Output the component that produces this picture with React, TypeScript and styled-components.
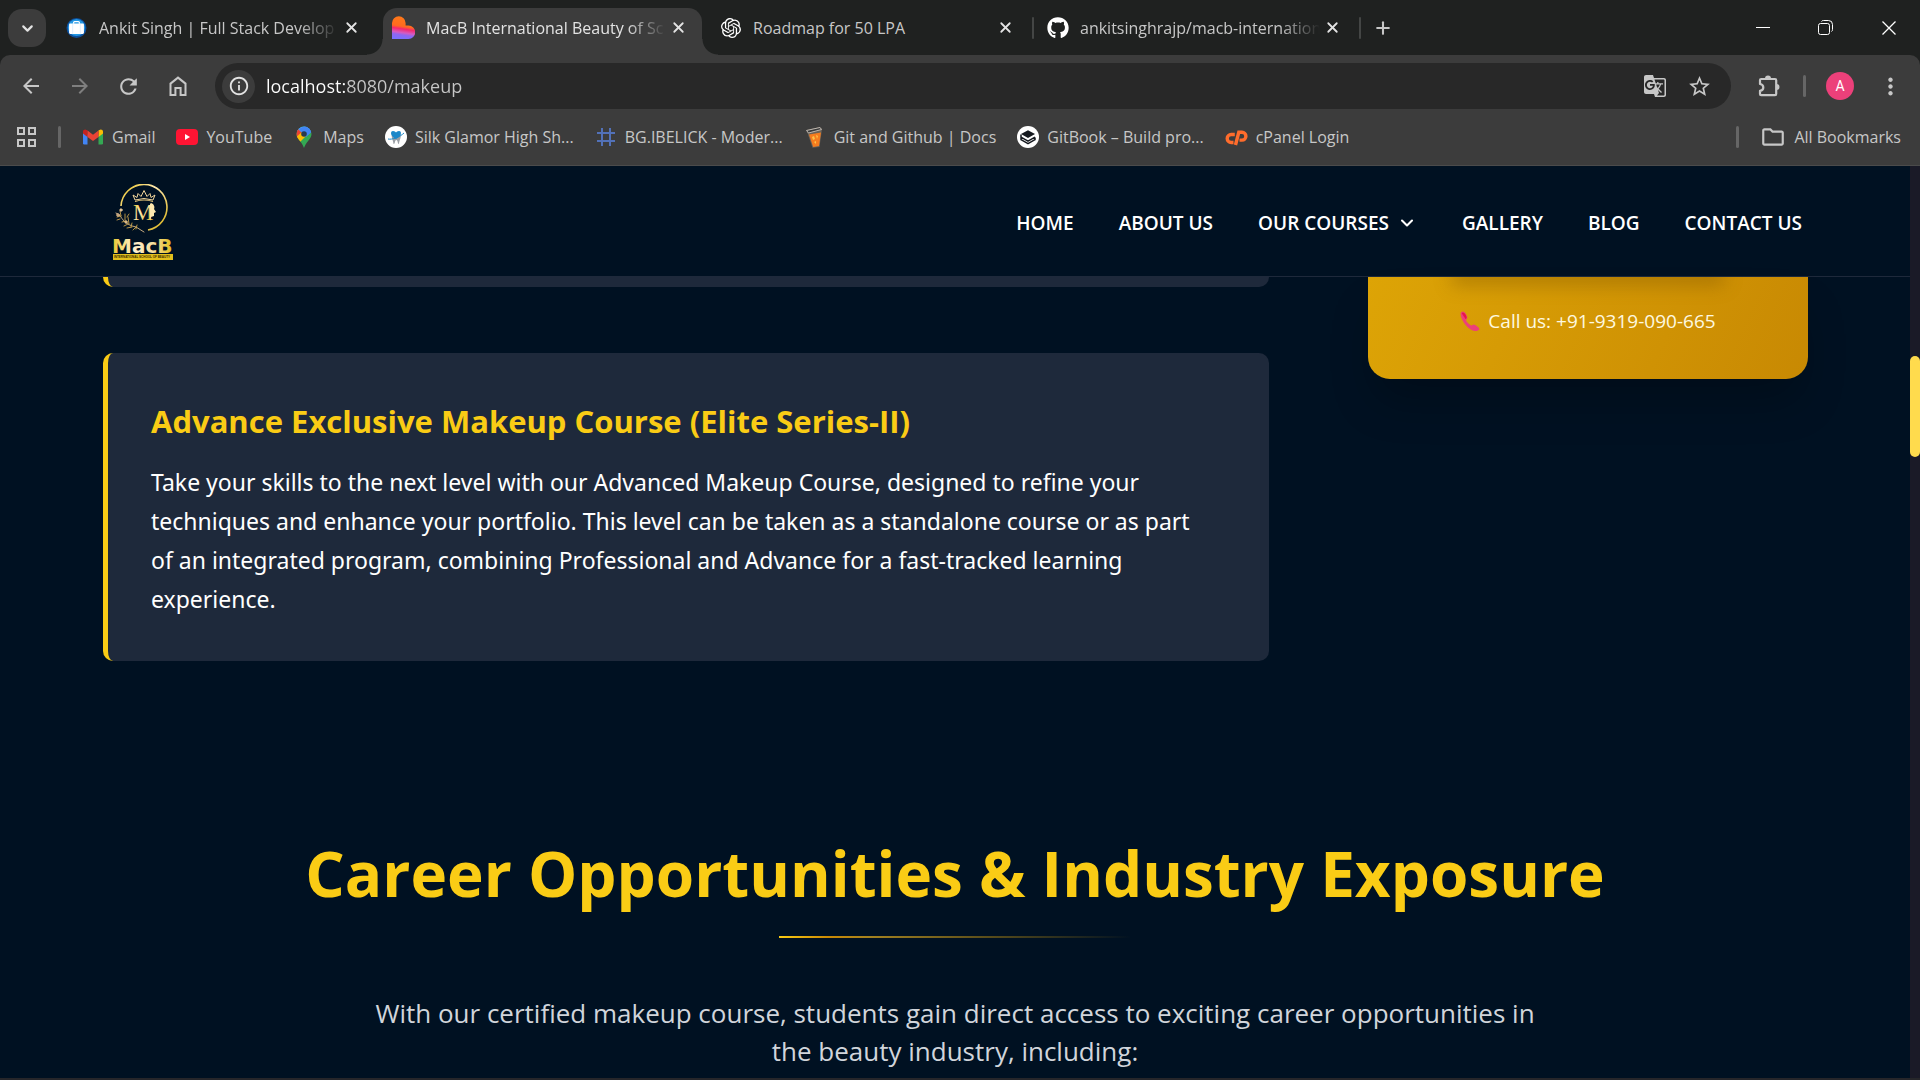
import React from "react";
import styled, { createGlobalStyle, css } from "styled-components";
import { SiOpenai } from "react-icons/si";
import { FaGithub } from "react-icons/fa";
import {
  MdArrowBack,
  MdArrowForward,
  MdGTranslate,
  MdInfoOutline,
  MdMoreVert,
  MdOutlineFolder,
  MdRefresh,
  MdStarBorder,
} from "react-icons/md";
import { ChevronDown, Plus, X } from "lucide-react";

const color = {
  strip: "#1f2120",
  toolbar: "#3c3c3c",
  omnibox: "#282828",
  chromeText: "#c7c7c7",
  chromeBright: "#e3e3e3",
  page: "#001122",
  card: "#1e293b",
  gold: "#facc15",
};

const GlobalStyle = createGlobalStyle`
  *, *::before, *::after { box-sizing: border-box; }
  body { margin: 0; background: ${color.page}; }
  h2, h3, p { margin: 0; }
  button { border: 0; padding: 0; background: none; color: inherit; font: inherit; cursor: pointer; }
  a { color: inherit; text-decoration: none; }
  svg { display: block; flex: none; }
`;

const Window = styled.div`
  display: flex;
  flex-direction: column;
  height: 100vh;
  overflow: hidden;
  border-bottom: 2px solid #26262a;
  font-family: "Open Sans", "Noto Sans", sans-serif;
  color: #fff;
`;

/* ---------- browser: tabs ---------- */

const TabStrip = styled.header`
  display: flex;
  align-items: stretch;
  height: 55px;
  flex: none;
  padding-left: 8px;
  background: ${color.strip};
  color: ${color.chromeText};
  font-size: 16px;
`;

const TabSearch = styled.button`
  display: grid;
  place-items: center;
  width: 38px;
  height: 38px;
  margin: 9px 10px 0 0;
  border-radius: 14px;
  background: ${color.toolbar};
  color: ${color.chromeBright};
`;

const flare = css`
  content: "";
  position: absolute;
  bottom: 0;
  width: 16px;
  height: 16px;
`;

const Tab = styled.div<{ $active?: boolean }>`
  position: relative;
  display: flex;
  align-items: center;
  flex: 0 1 319px;
  min-width: 0;
  margin-top: 8px;
  padding: 0 12px 8px 9px;
  border-radius: 14px 14px 0 0;
  ${(p) =>
    p.$active &&
    css`
      background: ${color.toolbar};
      color: ${color.chromeBright};
      &::before {
        ${flare}
        left: -16px;
        background: radial-gradient(circle at 0 0, transparent 15px, ${color.toolbar} 16px);
      }
      &::after {
        ${flare}
        right: -16px;
        background: radial-gradient(circle at 100% 0, transparent 15px, ${color.toolbar} 16px);
      }
    `}
`;

const TabIcon = styled.span`
  display: grid;
  place-items: center;
  flex: none;
  width: 23px;
  margin-right: 11px;
`;

const TabTitle = styled.button<{ $faded?: boolean }>`
  flex: 1;
  min-width: 0;
  white-space: nowrap;
  text-align: left;
  line-height: 24px;
  ${(p) =>
    p.$faded &&
    css`
      mask-image: linear-gradient(90deg, #000 calc(100% - 40px), transparent);
    `}
`;

const TabClose = styled.button`
  display: grid;
  place-items: center;
  flex: none;
  width: 24px;
  height: 24px;
  color: ${color.chromeBright};
`;

const TabDivider = styled.span<{ $visible?: boolean }>`
  align-self: center;
  flex: none;
  width: 2px;
  height: 22px;
  margin: 0 3px;
  border-radius: 1px;
  background: ${(p) => (p.$visible ? "#444645" : "transparent")};
`;

const NewTab = styled.button`
  display: grid;
  place-items: center;
  width: 38px;
`;

const WindowControls = styled.div`
  display: flex;
  margin-left: auto;
  color: #fff;
`;

const WindowButton = styled.button`
  display: grid;
  place-items: center;
  width: 63px;
`;

/* ---------- browser: toolbar ---------- */

const ToolbarBack = styled.div`
  flex: none;
  background: ${color.strip};
`;

const Toolbar = styled.div`
  display: flex;
  flex-direction: column;
  height: 111px;
  padding-top: 8px;
  border-radius: 10px 10px 0 0;
  border-bottom: 1px solid #4b4b4b;
  background: ${color.toolbar};
  color: ${color.chromeText};
`;

const AddressRow = styled.div`
  display: flex;
  align-items: center;
  height: 46px;
  padding: 0 16px 0 6px;
`;

const NavButton = styled.button<{ $muted?: boolean }>`
  display: grid;
  place-items: center;
  width: 49px;
  height: 46px;
  color: ${(p) => (p.$muted ? "#7f7f7f" : color.chromeText)};
`;

const Omnibox = styled.div`
  display: flex;
  align-items: center;
  flex: 1;
  height: 46px;
  margin: 0 16px 0 13px;
  padding: 0 20px 0 7px;
  border-radius: 23px;
  background: ${color.omnibox};
`;

const SiteInfo = styled.button`
  display: grid;
  place-items: center;
  width: 33px;
  height: 33px;
  border-radius: 50%;
  background: ${color.toolbar};
  color: ${color.chromeBright};
`;

const AddressInput = styled.input`
  flex: 1;
  min-width: 0;
  height: 40px;
  padding: 0 0 0 11px;
  border: 0;
  outline: 0;
  font: 18px "Open Sans", sans-serif;
  color: transparent;
  background: linear-gradient(90deg, #fff 90px, ${color.chromeText} 90px);
  background-clip: text;
`;

const OmniAction = styled.button`
  display: grid;
  place-items: center;
  width: 24px;
  height: 40px;
  margin-left: 20px;
`;

const Separator = styled.span<{ $space?: number }>`
  flex: none;
  width: 3px;
  height: 22px;
  margin: 0 ${(p) => p.$space ?? 0}px;
  border-radius: 2px;
  background: #666;
`;

const ToolButton = styled.button`
  display: grid;
  place-items: center;
  width: 44px;
  height: 44px;
`;

const Avatar = styled.button`
  display: grid;
  place-items: center;
  width: 28px;
  height: 28px;
  border-radius: 50%;
  background: #ec407a;
  color: #fff;
  font: 14px Roboto, sans-serif;
`;

const MenuButton = styled(ToolButton)`
  width: 28px;
  margin-left: 14px;
`;

const BookmarkBar = styled.nav`
  display: flex;
  align-items: center;
  gap: 21px;
  height: 56px;
  padding: 0 19px 0 16px;
  font-size: 16px;
  line-height: 24px;
`;

const Bookmark = styled.a`
  display: flex;
  align-items: center;
  gap: 8px;
  white-space: nowrap;
`;

const BookmarkEnd = styled.div`
  display: flex;
  align-items: center;
  gap: 21px;
  margin-left: auto;
`;

/* ---------- web page ---------- */

const Viewport = styled.div`
  display: flex;
  flex: 1;
  min-height: 0;
  background: ${color.page};
`;

const Page = styled.div`
  flex: 1;
  min-width: 0;
  overflow: hidden;
`;

const ScrollTrack = styled.div`
  flex: none;
  width: 10px;
  padding-top: 190px;
  background: #1a1a27;
`;

const ScrollThumb = styled.div`
  height: 101px;
  border-radius: 5px;
  background: #ffdb4d;
`;

const SiteHeader = styled.header`
  display: flex;
  align-items: center;
  justify-content: space-between;
  height: 111px;
  padding: 3px 108px 0 110px;
  border-bottom: 1px solid #1e293b;
`;

const SiteNav = styled.nav`
  display: flex;
  align-items: center;
  gap: 45px;
  font-size: 19px;
  font-weight: 600;
  line-height: 28px;
`;

const MenuToggle = styled.button`
  display: flex;
  align-items: center;
  gap: 8px;
`;

const CourseArea = styled.section`
  display: flex;
  align-items: flex-start;
  gap: 99px;
  padding: 0 102px 0 103px;
`;

const CourseList = styled.div`
  flex: 1;
  min-width: 0;
`;

const CardTail = styled.div`
  height: 10px;
  margin-bottom: 66px;
  border-left: 5px solid ${color.gold};
  border-radius: 0 0 10px 10px;
  background: ${color.card};
`;

const CourseCard = styled.article`
  padding: 44px 44px 42px 43px;
  border-left: 5px solid ${color.gold};
  border-radius: 10px;
  background: ${color.card};
`;

const CourseTitle = styled.h3`
  margin-bottom: 18px;
  color: ${color.gold};
  font-size: 31px;
  font-weight: 700;
  line-height: 48px;
`;

const CourseText = styled.p`
  max-width: 1056px;
  font-family: "Noto Sans", "Open Sans", sans-serif;
  font-size: 23px;
  line-height: 39px;
`;

const CallCard = styled.aside`
  width: 440px;
  flex: none;
  padding-bottom: 40px;
  border-radius: 0 0 22px 22px;
  background: linear-gradient(115deg, #dda406, #c88903);
  box-shadow: 0 28px 44px -8px rgba(0, 0, 0, 0.25);
`;

const ButtonShade = styled.div`
  height: 28px;
  margin: 0 64px;
  overflow: hidden;
  &::before {
    content: "";
    display: block;
    height: 10px;
    margin: -10px 24px 0;
    box-shadow: 0 4px 18px 4px rgba(120, 80, 0, 0.4);
  }
`;

const CallLine = styled.p`
  display: flex;
  align-items: center;
  justify-content: center;
  gap: 8px;
  padding: 2px 0 4px;
  color: #fef9e0;
  font-size: 19px;
  line-height: 28px;
`;

const Career = styled.section`
  display: flex;
  flex-direction: column;
  align-items: center;
  margin-top: 174px;
  padding: 0 102px;
`;

const CareerTitle = styled.h2`
  color: ${color.gold};
  font-size: 62px;
  font-weight: 700;
  line-height: 76px;
  text-align: center;
`;

const TitleRule = styled.div`
  width: 352px;
  height: 2px;
  margin: 25px 0 56px;
  background: linear-gradient(90deg, #facc15, #ca8a04 14%, #a38220 26%, rgba(160, 125, 20, 0.55) 60%, transparent);
`;

const CareerText = styled.p`
  max-width: 1200px;
  color: #d1d5db;
  font-size: 26px;
  line-height: 38px;
  text-align: center;
`;

/* ---------- drawings ---------- */

const BriefcaseIcon = () => (
  <svg width="21" height="22" viewBox="0 0 22 22">
    <circle cx="11" cy="11" r="10.5" fill="#0d4f9c" />
    <circle cx="11" cy="10.500" r="9" fill="#2196e3" />
    <path d="M8 6.500V5.200Q8 4.200 9 4.200h4q1 0 1 1v1.300" fill="none" stroke="#fff" strokeWidth="1.3" />
    <rect x="3.200" y="6.400" width="15.600" height="10.800" rx="1.2" fill="#fff" />
    <path d="M7 6.500v10.500M15 6.500v10.500" stroke="#cfe6fa" strokeWidth=".7" />
  </svg>
);

const HeartIcon = () => (
  <svg width="23" height="23" viewBox="0 0 23 23">
    <defs>
      <linearGradient id="heart" x1=".55" y1="0" x2=".4" y2="1">
        <stop offset="0" stopColor="#ff7a18" />
        <stop offset=".45" stopColor="#ff6a1f" />
        <stop offset=".56" stopColor="#f5286e" />
        <stop offset=".72" stopColor="#d65cc0" />
        <stop offset=".82" stopColor="#8f66f0" />
        <stop offset="1" stopColor="#7a70ff" />
      </linearGradient>
    </defs>
    <path d="M0 7a6.800 6.800 0 0 1 13.600 0v2.600H16.500a6.500 6.500 0 0 1 0 13.400H0z" fill="url(#heart)" />
  </svg>
);

const GmailIcon = () => (
  <svg width="22" height="22" viewBox="0 0 22 22">
    <path d="M1 5.5V17.2q0 1.3 1.3 1.3H5.5V8.8z" fill="#4285f4" />
    <path d="M21 5.5V17.2q0 1.3-1.3 1.3H16.5V8.8z" fill="#34a853" />
    <path d="M16.5 4.6V11L21 7.6V5.6c0-2.1-2.3-2.8-3.6-1.7z" fill="#fbbc04" />
    <path d="M1 5.6v2L5.5 11V4.6l-.9-.7C3.3 2.8 1 3.5 1 5.6z" fill="#c5221f" />
    <path d="M5.5 4.6V11l5.5 4.1L16.5 11V4.6L11 8.7z" fill="#ea4335" />
  </svg>
);

const YouTubeIcon = () => (
  <svg width="22" height="22" viewBox="0 0 22 22">
    <rect x="0" y="3" width="22" height="16" rx="4" fill="#ff1433" />
    <path d="M9 8l5 3-5 3z" fill="#fff" />
  </svg>
);

const MapsIcon = () => (
  <svg width="22" height="22" viewBox="0 0 22 22">
    <defs>
      <clipPath id="pin">
        <path d="M11 .5a7.5 7.5 0 0 0-7.5 7.500c0 3 1.700 4.700 3.600 7.200C8.800 17.400 9.800 19 11 22c1.200-3 2.200-4.600 3.900-6.800 1.900-2.500 3.600-4.200 3.600-7.200A7.500 7.500 0 0 0 11 .5z" />
      </clipPath>
    </defs>
    <g clipPath="url(#pin)">
      <path d="M0 0h22v22H0z" fill="#34a853" />
      <path d="M0 0h22L11 11 3 4z" fill="#4a9bf5" />
      <path d="M0 0l5 3 5 5-7 7-3-4z" fill="#ea4335" />
      <path d="M2 12l8-7 3 5-8 8z" fill="#fbbc04" />
      <path d="M6 3L16-2l4 7-7 6z" fill="#4285f4" />
    </g>
    <circle cx="11" cy="8" r="2.8" fill="#2a3a4e" />
  </svg>
);

const ToothIcon = () => (
  <svg width="22" height="22" viewBox="0 0 22 22">
    <circle cx="11" cy="11" r="11" fill="#fff" />
    <path d="M7 8c-1 4 1 5 1.500 10 2 0 1-4 2.800-4s1 4 2.700 4c.5-5 2.500-6 1.500-10z" fill="#9b9fa5" />
    <path d="M11 13C5 10 5 5 8 5c1.500 0 2.500.8 3 1.600C11.500 5.800 12.500 5 14 5c3 0 3 5-3 8z" fill="#1c87c9" />
    <path d="M3 13c4 1 12-2 16-6" fill="none" stroke="#1c87c9" strokeWidth="1" />
  </svg>
);

const HashIcon = () => (
  <svg width="22" height="22" viewBox="0 0 22 22">
    <path d="M7 2v18M15 2v18M2 7h18M2 15h18" stroke="#5271b8" strokeWidth="2" />
  </svg>
);

const CupIcon = () => (
  <svg width="22" height="22" viewBox="0 0 22 22">
    <path d="M2.500 4L16 1l2 2-2.500 18-7 .8z" fill="#6b6258" />
    <path d="M2.500 4.500L16 1.500l1.500 2L4.500 7z" fill="#3a3a3a" stroke="#bdb7b0" strokeWidth="1" />
    <path d="M5 8.500l12-2L15 20l-5.800 1z" fill="#f57c1f" />
    <path d="M8 11l2-1 1 3-2 1zM12 9l2 1-1 3zM10 16l2-1v3z" fill="#ffc247" />
  </svg>
);

const GitBookIcon = () => (
  <svg width="22" height="22" viewBox="0 0 22 22">
    <circle cx="11" cy="11" r="11" fill="#fff" />
    <path d="M11 4.200L18 8l-7 4-7-4z" fill="#15191f" />
    <path d="M4 8.500v2.700l7 4 7-4M4 11.500v2.200l7 4 7-4v-2.200" fill="none" stroke="#15191f" strokeWidth="1.500" strokeLinejoin="round" />
  </svg>
);

/* The two interlocked loops of the cPanel mark */
const CpanelIcon = () => (
  <svg width="23" height="22" viewBox="0 0 23 22" fill="none" stroke="#ff6c2c" strokeWidth="3.400">
    <path d="M9.800 8.500H6.200a4 4 0 0 0 0 8H8.500" />
    <path d="M10.500 19l3.300-12.700H17a3.900 3.900 0 0 1 0 7.800H14.500" />
  </svg>
);

const AppsIcon = () => (
  <svg width="21" height="22" viewBox="0 0 21 22" fill="none" stroke="currentColor" strokeWidth="2">
    <path d="M2 2h6v6H2zM13 2h6v6h-6zM2 14h6v6H2zM13 14h6v6h-6z" />
  </svg>
);

const HomeIcon = () => (
  <svg width="20" height="22" viewBox="0 0 20 22" fill="none" stroke="currentColor" strokeWidth="2">
    <path d="M2.500 8.600L10 2.600l7.500 6V20H12.600V13H7.400v7H2.500z" />
  </svg>
);

const PuzzleIcon = () => (
  <svg width="24" height="24" viewBox="0 0 24 24">
    <path d="M3 6.200q0-1.200 1.200-1.200H18q1.200 0 1.200 1.200V20q0 1.200-1.200 1.200H4.200Q3 21.200 3 20v-3.200q3.300-.6 3.300-3.400T3 10z" fill="none" stroke="currentColor" strokeWidth="2.200" strokeLinejoin="round" />
    <path d="M8 4.500a3 3 0 0 1 6 0zM19.500 10a3 3 0 0 1 0 6z" fill="currentColor" />
  </svg>
);

const PhoneIcon = () => (
  <svg width="20" height="20" viewBox="0 0 20 20">
    <path d="M1 1.500C2.500-.3 4.500.5 6 3.200s1.800 4 .4 5.300c-.8.800.2 2.300 2 4s3.200 2.500 4 1.600c1.200-1.300 2.600-.6 5 1.300s2.600 3.300.6 4.200c-3.500 1.500-8.600-1-12.200-5.300S-.5 4 1 1.500z" fill="#ec407a" />
    <path d="M1.500 2C3 .8 4.500 1.500 5.800 4S7 7.500 5.500 8z" fill="#e8174a" />
  </svg>
);

const Flourish = () => (
  <g fill="none" stroke="#d9b98a" strokeWidth=".9" strokeLinecap="round">
    <path d="M3 29c4 1 5 5 8 8s7 5 12 6l8 5" />
    <path d="M4 33l4-1M7 27l1 5M9 38l4-1M12 30l0 6M11 42l4-2M15 33l1 7M19 39l-1 4M14 44l5-1M20 46l3-3M24 41l-1 4M7 35l-3 1M16 30l-2 3" stroke="#c9a24a" />
    <circle cx="8" cy="26" r="1.2" fill="#f0dcb8" />
    <circle cx="5" cy="31" r="1.3" fill="#a98a72" />
    <circle cx="13" cy="38" r="1.2" fill="#e0c080" />
  </g>
);

const BrandLogo = () => (
  <svg width="66" height="78" viewBox="-3 0 66 78" role="img" aria-label="MacB International School of Beauty">
    <defs>
      <linearGradient id="gold" x1="0" y1="0" x2="1" y2="1">
        <stop offset="0" stopColor="#e8c018" />
        <stop offset=".4" stopColor="#ffe9b0" />
        <stop offset="1" stopColor="#d8b010" />
      </linearGradient>
      <linearGradient id="word" x1="0" y1="0" x2="1" y2="0">
        <stop offset="0" stopColor="#e9c62a" />
        <stop offset=".35" stopColor="#fff0cf" />
        <stop offset=".7" stopColor="#f5dd9a" />
        <stop offset="1" stopColor="#e2bd17" />
      </linearGradient>
    </defs>
    <path d="M8 22A23 23 0 1 1 35 46" fill="none" stroke="url(#gold)" strokeWidth="1.600" />
    <path d="M22 16l-2-5 4 2.500 1-4 3 3 3-6 3 6 3-3 1 4 4-2.500-2 5q-9-3-18 0z" fill="none" stroke="#f0d49a" strokeWidth="1" />
    <path d="M22 17.500q9-3 18 0" fill="none" stroke="#e8c878" strokeWidth="1.200" />
    <text x="20" y="36" fill="url(#gold)" fontFamily="Liberation Serif, serif" fontSize="23">M</text>
    <path d="M38 19c3 1 4 4 3 6l2 3-2 1v3l-3 1-1 4V20z" fill="#ffe9b0" />
    <Flourish />
    <text x="-1" y="69" fill="url(#word)" fontFamily="DejaVu Sans, sans-serif" fontWeight="700" fontSize="20">MacB</text>
    <rect x="0" y="70" width="60" height="6" fill="#e2be1c" />
    <text x="1" y="74" fill="#3a2c00" fontFamily="Liberation Sans, sans-serif" fontWeight="700" fontSize="3">INTERNATIONAL SCHOOL OF BEAUTY</text>
  </svg>
);

/* ---------- data ---------- */

const tabs = [
  { title: "Ankit Singh | Full Stack Develop", icon: <BriefcaseIcon />, faded: true },
  { title: "MacB International Beauty of Sc", icon: <HeartIcon />, faded: true, active: true },
  { title: "Roadmap for 50 LPA", icon: <SiOpenai size={20} color="#fff" />, divider: true },
  { title: "ankitsinghrajp/macb-internation", icon: <FaGithub size={22} color="#fff" />, faded: true, divider: true },
];

const bookmarks = [
  { title: "Gmail", icon: <GmailIcon /> },
  { title: "YouTube", icon: <YouTubeIcon /> },
  { title: "Maps", icon: <MapsIcon /> },
  { title: "Silk Glamor High Sh...", icon: <ToothIcon /> },
  { title: "BG.IBELICK - Moder...", icon: <HashIcon /> },
  { title: "Git and Github | Docs", icon: <CupIcon /> },
  { title: "GitBook – Build pro...", icon: <GitBookIcon /> },
  { title: "cPanel Login", icon: <CpanelIcon /> },
];

export default function App() {
  return (
    <Window>
      <GlobalStyle />
      <TabStrip>
        <TabSearch aria-label="Search tabs">
          <ChevronDown size={17} strokeWidth={3} />
        </TabSearch>
        {tabs.map((tab) => (
          <React.Fragment key={tab.title}>
            <Tab $active={tab.active}>
              <TabIcon>{tab.icon}</TabIcon>
              <TabTitle $faded={tab.faded}>{tab.title}</TabTitle>
              <TabClose aria-label={`Close ${tab.title}`}>
                <X size={17} strokeWidth={2.5} />
              </TabClose>
            </Tab>
            <TabDivider $visible={tab.divider} />
          </React.Fragment>
        ))}
        <NewTab aria-label="New tab">
          <Plus size={20} strokeWidth={2.5} />
        </NewTab>
        <WindowControls>
          <WindowButton aria-label="Minimize">
            <svg width="14" height="14" viewBox="0 0 14 14" stroke="currentColor">
              <path d="M0 6.500h14" />
            </svg>
          </WindowButton>
          <WindowButton aria-label="Restore">
            <svg width="15" height="15" viewBox="0 0 15 15" fill="none" stroke="currentColor">
              <rect x=".5" y="3.500" width="11" height="11" rx="2" />
              <path d="M3.500 1.500q.5-1 2-1h5q4 0 4 4v5q0 1.500-1 2" />
            </svg>
          </WindowButton>
          <WindowButton aria-label="Close window">
            <svg width="14" height="14" viewBox="0 0 14 14" stroke="currentColor" strokeWidth="1.300">
              <path d="M.5.5l13 13M13.500.5l-13 13" />
            </svg>
          </WindowButton>
        </WindowControls>
      </TabStrip>

      <ToolbarBack>
        <Toolbar>
          <AddressRow>
            <NavButton aria-label="Back"><MdArrowBack size={24} /></NavButton>
            <NavButton aria-label="Forward" $muted><MdArrowForward size={24} /></NavButton>
            <NavButton aria-label="Reload"><MdRefresh size={25} /></NavButton>
            <NavButton aria-label="Home"><HomeIcon /></NavButton>
            <Omnibox>
              <SiteInfo aria-label="Site information"><MdInfoOutline size={22} /></SiteInfo>
              <AddressInput aria-label="Address" defaultValue="localhost:8080/makeup" spellCheck={false} />
              <OmniAction aria-label="Translate"><MdGTranslate size={24} /></OmniAction>
              <OmniAction aria-label="Bookmark this page"><MdStarBorder size={25} /></OmniAction>
            </Omnibox>
            <ToolButton aria-label="Extensions"><PuzzleIcon /></ToolButton>
            <Separator $space={12} />
            <ToolButton as="span"><Avatar aria-label="Profile">A</Avatar></ToolButton>
            <MenuButton aria-label="Menu"><MdMoreVert size={27} /></MenuButton>
          </AddressRow>
          <BookmarkBar aria-label="Bookmarks">
            <button aria-label="Apps"><AppsIcon /></button>
            <Separator />
            {bookmarks.map((b) => (
              <Bookmark href="#" key={b.title}>
                {b.icon}
                {b.title}
              </Bookmark>
            ))}
            <BookmarkEnd>
              <Separator />
              <Bookmark href="#">
                <MdOutlineFolder size={26} />
                All Bookmarks
              </Bookmark>
            </BookmarkEnd>
          </BookmarkBar>
        </Toolbar>
      </ToolbarBack>

      <Viewport>
        <Page>
          <SiteHeader>
            <a href="#" aria-label="MacB home"><BrandLogo /></a>
            <SiteNav>
              <a href="#">HOME</a>
              <a href="#">ABOUT US</a>
              <MenuToggle>
                OUR COURSES
                <ChevronDown size={20} strokeWidth={2.5} />
              </MenuToggle>
              <a href="#">GALLERY</a>
              <a href="#">BLOG</a>
              <a href="#">CONTACT US</a>
            </SiteNav>
          </SiteHeader>

          <main>
            <CourseArea>
              <CourseList>
                <CardTail />
                <CourseCard>
                  <CourseTitle>Advance Exclusive Makeup Course (Elite Series-II)</CourseTitle>
                  <CourseText>
                    Take your skills to the next level with our Advanced Makeup Course, designed to refine your
                    techniques and enhance your portfolio. This level can be taken as a standalone course or as part
                    of an integrated program, combining Professional and Advance for a fast-tracked learning
                    experience.
                  </CourseText>
                </CourseCard>
              </CourseList>
              <CallCard>
                <ButtonShade />
                <CallLine>
                  <PhoneIcon />
                  Call us: +91-9319-090-665
                </CallLine>
              </CallCard>
            </CourseArea>

            <Career>
              <CareerTitle>Career Opportunities &amp; Industry Exposure</CareerTitle>
              <TitleRule />
              <CareerText>
                With our certified makeup course, students gain direct access to exciting career opportunities in
                the beauty industry, including:
              </CareerText>
            </Career>
          </main>
        </Page>
        <ScrollTrack>
          <ScrollThumb />
        </ScrollTrack>
      </Viewport>
    </Window>
  );
}
